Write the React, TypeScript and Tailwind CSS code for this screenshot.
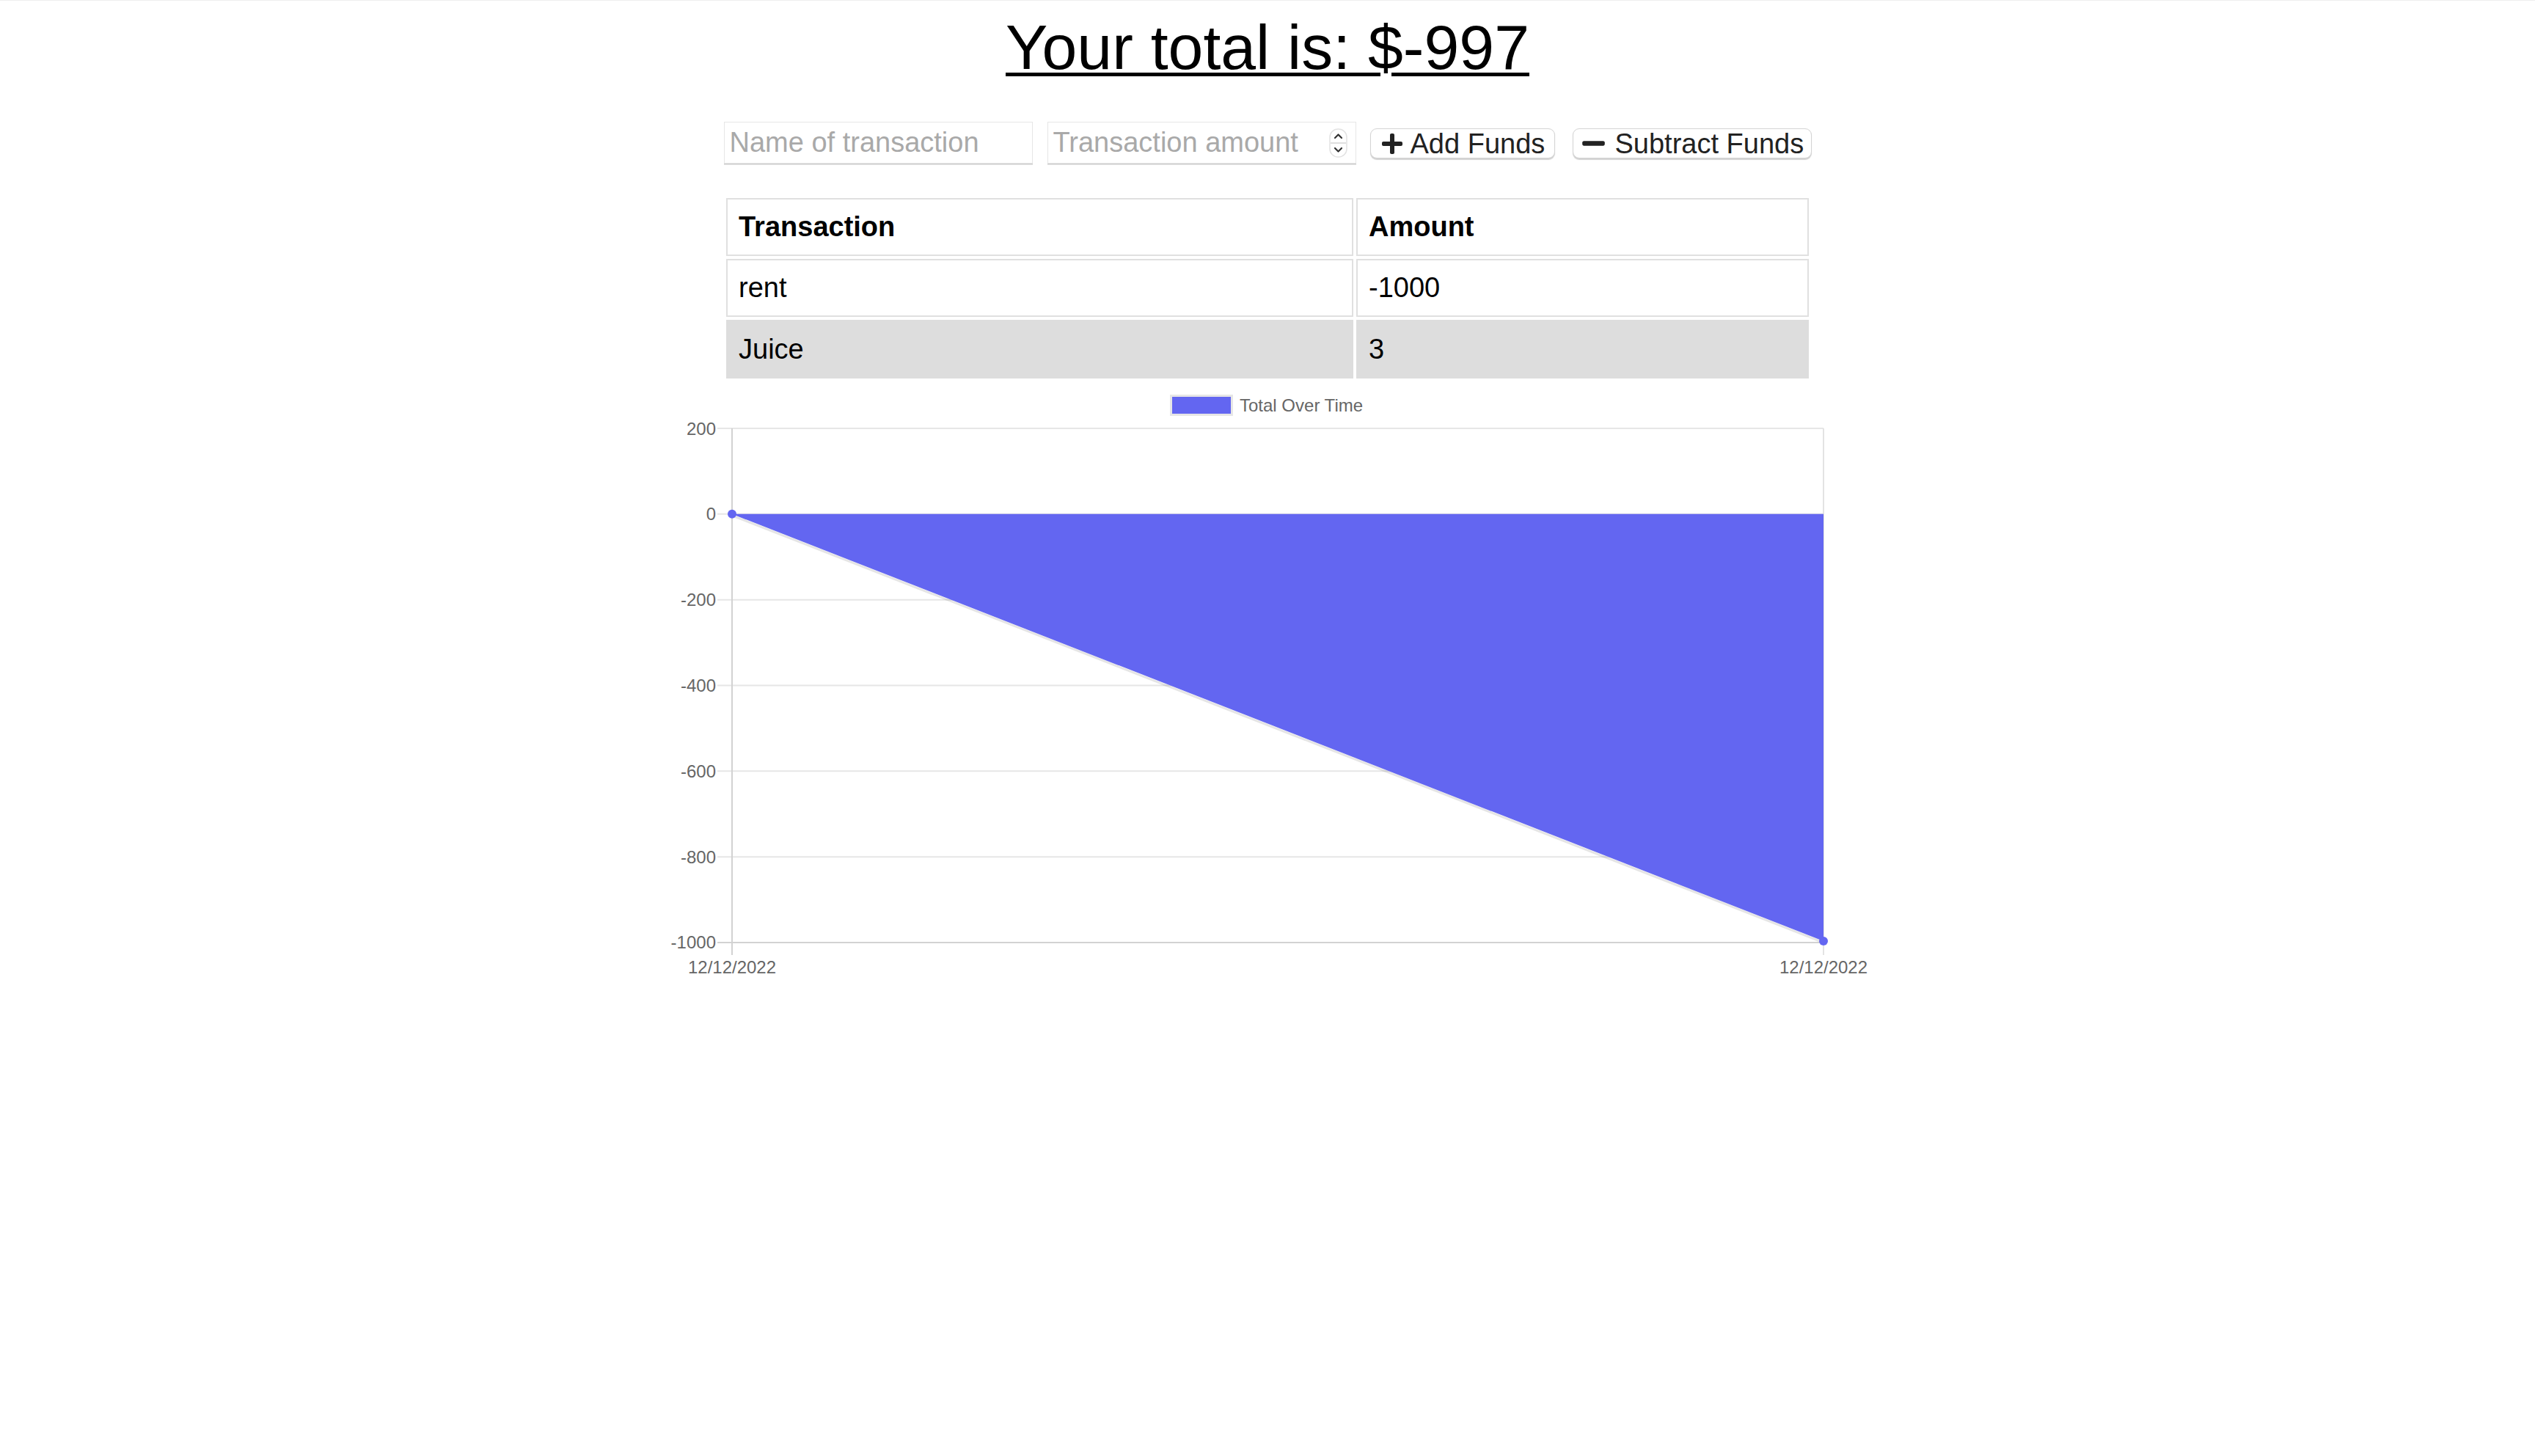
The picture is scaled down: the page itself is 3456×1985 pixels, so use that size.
import { FaPlus, FaMinus } from "react-icons/fa";

const ticks = [200, 0, -200, -400, -600, -800, -1000];
const plotLeft = 100;
const plotRight = 1588;
const plotTop = 59;
const step = 116.83;
const yOf = (i: number) => plotTop + i * step;

function Spinner() {
  return (
    <svg width="25" height="40" viewBox="0 0 25 40" className="shrink-0">
      <rect x="1" y="1" width="23" height="38" rx="11" fill="#fff" stroke="#e2e2e2" strokeWidth="1.5" />
      <line x1="2" y1="20" x2="23" y2="20" stroke="#d5d5d5" strokeWidth="1.5" />
      <path d="M8 13 L12.5 8.5 L17 13" fill="none" stroke="#333" strokeWidth="2.2" strokeLinecap="round" strokeLinejoin="round" />
      <path d="M8 27 L12.5 31.5 L17 27" fill="none" stroke="#333" strokeWidth="2.2" strokeLinecap="round" strokeLinejoin="round" />
    </svg>
  );
}

function Chart() {
  const zeroY = yOf(1);
  const bottomY = yOf(6);
  return (
    <svg width="1660" height="820" viewBox="0 0 1660 820" className="mx-auto mt-[5px] block">
      {/* legend */}
      <rect x="698.5" y="14.5" width="83" height="26" fill="#6366f1" stroke="#e6e6e6" strokeWidth="3" />
      <text x="792" y="36" fontSize="24" fill="#666" fontFamily="'Liberation Sans', Arial, sans-serif">
        Total Over Time
      </text>

      {/* horizontal grid */}
      {ticks.map((t, i) => (
        <g key={t}>
          <line
            x1={80}
            x2={plotRight}
            y1={yOf(i)}
            y2={yOf(i)}
            stroke={i === 6 ? "#d2d2d2" : "#e6e6e6"}
            strokeWidth="2"
          />
          <text
            x="78"
            y={yOf(i) + 8.5}
            textAnchor="end"
            fontSize="24"
            fill="#666"
            fontFamily="'Liberation Sans', Arial, sans-serif"
          >
            {t}
          </text>
        </g>
      ))}

      {/* vertical grid */}
      <line x1={plotRight} x2={plotRight} y1={plotTop} y2={777} stroke="#e3e3e3" strokeWidth="2" />
      <line x1={plotLeft} x2={plotLeft} y1={plotTop} y2={777} stroke="#d2d2d2" strokeWidth="2" />

      {/* area */}
      <polygon points={`${plotLeft},${zeroY} ${plotRight},${zeroY} ${plotRight},${bottomY - 2}`} fill="#6366f1" />
      <line x1={plotLeft} y1={zeroY + 2} x2={plotRight} y2={bottomY} stroke="rgba(0,0,0,0.1)" strokeWidth="3" />
      <circle cx={plotLeft} cy={zeroY} r="6" fill="#6366f1" />
      <circle cx={plotRight} cy={bottomY - 2} r="6" fill="#6366f1" />

      {/* x labels */}
      {[plotLeft, plotRight].map((x) => (
        <text
          key={x}
          x={x}
          y="802"
          textAnchor="middle"
          fontSize="24"
          fill="#666"
          fontFamily="'Liberation Sans', Arial, sans-serif"
        >
          12/12/2022
        </text>
      ))}
    </svg>
  );
}

export default function App() {
  return (
    <div className="min-h-screen bg-white font-['Liberation_Sans',Arial,sans-serif] text-black">
      <div className="h-px bg-[#efefef]" />
      <h1 className="mt-[14px] text-center text-[86px] leading-[98px] font-normal underline decoration-[5px] underline-offset-[5px]">
        Your total is: $-997
      </h1>

      <div className="mt-[53px] flex items-center justify-center">
        <input
          type="text"
          placeholder="Name of transaction"
          className="h-[57px] w-[421px] border border-[#e6e6e6] pl-[7px] text-[38px] shadow-[0_1.5px_0_#cbcbcb] outline-none placeholder:text-[#a9a9a9]"
        />
        <div className="ml-[20px] flex h-[57px] w-[421px] items-center border border-[#e6e6e6] pl-[7px] pr-[11px] shadow-[0_1.5px_0_#cbcbcb]">
          <input
            type="text"
            placeholder="Transaction amount"
            className="min-w-0 flex-1 text-[38px] outline-none placeholder:text-[#a9a9a9]"
          />
          <Spinner />
        </div>
        <button className="ml-[19px] mt-[2px] flex h-[41px] w-[252px] items-center gap-[9px] rounded-[9px] border border-[#d4d4d4] bg-white pl-[13px] text-[38px] leading-none text-[#222] shadow-[0_1.5px_1px_rgba(0,0,0,0.18)]">
          <FaPlus size={32} className="shrink-0" />
          <span>Add Funds</span>
        </button>
        <button className="ml-[24px] mt-[2px] flex h-[41px] w-[326px] items-center gap-[12px] rounded-[9px] border border-[#d4d4d4] bg-white pl-[10px] text-[38px] leading-none text-[#222] shadow-[0_1.5px_1px_rgba(0,0,0,0.18)]">
          <FaMinus size={35} className="shrink-0" />
          <span>Subtract Funds</span>
        </button>
      </div>

      <table className="mx-auto mt-[43px] border-separate border-spacing-[4px] text-[38px]">
        <thead>
          <tr>
            <th className="h-[79px] w-[855px] border-2 border-[#e0e0e0] pl-[15px] text-left font-bold">Transaction</th>
            <th className="h-[79px] w-[617px] border-2 border-[#e0e0e0] pl-[15px] text-left font-bold">Amount</th>
          </tr>
        </thead>
        <tbody>
          <tr>
            <td className="h-[79px] border-2 border-[#e0e0e0] pl-[15px]">rent</td>
            <td className="h-[79px] border-2 border-[#e0e0e0] pl-[15px]">-1000</td>
          </tr>
          <tr className="bg-[#dddddd]">
            <td className="h-[80px] border-2 border-[#dddddd] pl-[15px]">Juice</td>
            <td className="h-[80px] border-2 border-[#dddddd] pl-[15px]">3</td>
          </tr>
        </tbody>
      </table>

      <Chart />
    </div>
  );
}
